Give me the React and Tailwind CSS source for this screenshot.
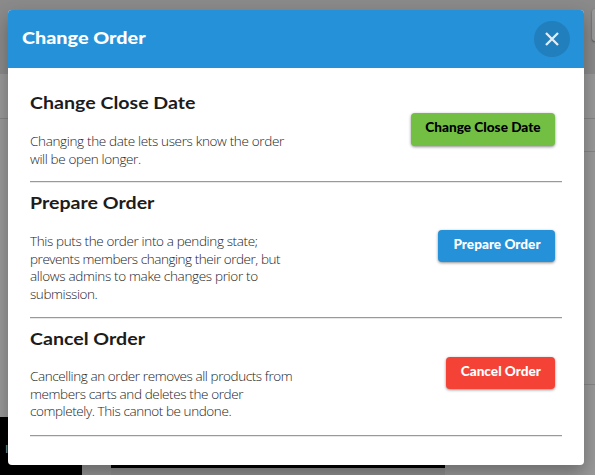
const sections = [
  {
    title: 'Change Close Date',
    lines: [
      { text: 'Changing the date lets users know the order', cls: 'tracking-[-0.34px]' },
      { text: 'will be open longer.', cls: 'tracking-[-0.36px]' },
    ],
    box: 'h-[89px]',
    bodyGap: 'mt-[19px]',
    button: 'mt-[21px] h-[33px] w-[144px] bg-[#72bf44] text-black',
  },
  {
    title: 'Prepare Order',
    lines: [
      { text: 'This puts the order into a pending state;', cls: 'tracking-[-0.37px]' },
      { text: 'prevents members changing their order, but', cls: 'tracking-[-0.45px]' },
      { text: 'allows admins to make changes prior to', cls: 'tracking-[-0.33px]' },
      { text: 'submission.', cls: 'tracking-[-0.42px]' },
    ],
    box: 'h-[125px]',
    bodyGap: 'mt-[19px]',
    button: 'mt-[38px] h-[32px] w-[117px] bg-[#2591d8] text-white',
  },
  {
    title: 'Cancel Order',
    lines: [
      { text: 'Cancelling an order removes all products from', cls: 'tracking-[-0.41px]' },
      { text: 'members carts and deletes the order', cls: 'tracking-[-0.38px]' },
      { text: 'completely. This cannot be undone.', cls: 'tracking-[-0.42px]' },
    ],
    box: 'h-[107px]',
    bodyGap: 'mt-[18px]',
    button: 'mt-[29px] h-[32px] w-[109px] bg-[#f44336] text-white',
  },
];

function Section({ section }) {
  return (
    <section>
      <div className={`flex justify-between ${section.box}`}>
        <div>
          <h2 className="h-[22px] origin-left scale-x-[1.12] text-[17.5px] leading-[22px] font-bold whitespace-nowrap text-[#1c1c1c]">
            {section.title}
          </h2>
          <p className={`font-['Open_Sans',sans-serif] text-[13.5px] leading-[17.7px] font-light whitespace-nowrap text-[#242424] ${section.bodyGap}`}>
            {section.lines.map((line) => (
              <span key={line.text} className={`block ${line.cls}`}>{line.text}</span>
            ))}
          </p>
        </div>
        <button className={`mr-[7px] flex items-center justify-center rounded-[4px] pb-[2px] text-[12.5px] font-black whitespace-nowrap shadow-[0_1px_3px_rgba(0,0,0,0.45)] ${section.button}`}>
          <span className="scale-x-[1.09]">{section.title}</span>
        </button>
      </div>
      <hr className="h-[2px] border-t border-b border-t-[#999] border-b-[#e8e8e8]" />
    </section>
  );
}

function Backdrop() {
  return (
    <div className="flex h-[475px] flex-col bg-[#999]">
      <div className="flex h-[74px] shrink-0 justify-end bg-[#8a8a8a] pt-[9px]">
        <div className="h-[32px] w-[3px] rounded-l-[3px] bg-[#999] shadow-[0_1px_2px_rgba(0,0,0,0.5)]" />
      </div>
      <div className="h-[45px] shrink-0 border-b border-[#858585]" />
      <div className="flex h-[298px] shrink-0 justify-end">
        <div className="w-[12px]">
          <div className="h-[33px] border-b border-[#858585]" />
          <div className="h-[233px] border-b border-[#858585]" />
        </div>
      </div>
      <div className="flex h-[58px]">
        <div className="flex h-full w-[82px] items-center bg-black pt-[5px] pl-[5px] text-[12px] text-[#999]">I</div>
        <div className="h-full w-[29px] bg-[#939393]" />
        <div className="h-full w-[334px] bg-[#8e8e8e]">
          <div className="h-[51px] bg-black" />
        </div>
      </div>
    </div>
  );
}

export default function App() {
  return (
    <main className="relative h-[475px] w-[595px] overflow-hidden font-['Lato',sans-serif]">
      <Backdrop />
      <div role="dialog" className="absolute top-[10px] left-[8px] h-[455px] w-[576px] overflow-hidden rounded-[4px] bg-white shadow-[0_8px_18px_rgba(0,0,0,0.3)]">
        <header className="flex h-[58px] items-center justify-between bg-[#2591d8] pr-[14px] pl-[14px] text-white">
          <h1 className="origin-left scale-x-[1.13] pb-[2px] text-[17.5px] font-black whitespace-nowrap">Change Order</h1>
          <button aria-label="Close" className="flex size-[36px] items-center justify-center rounded-full bg-[#227fbd]">
            <svg width="14" height="14" viewBox="0 0 14 14" fill="none" stroke="#e3edf5" strokeWidth="2.3">
              <path d="M1 1L13 13M13 1L1 13" />
            </svg>
          </button>
        </header>
        <div className="flex flex-col gap-[9px] pt-[24px] pr-[22px] pl-[22px]">
          {sections.map((section) => (
            <Section key={section.title} section={section} />
          ))}
        </div>
      </div>
    </main>
  );
}
